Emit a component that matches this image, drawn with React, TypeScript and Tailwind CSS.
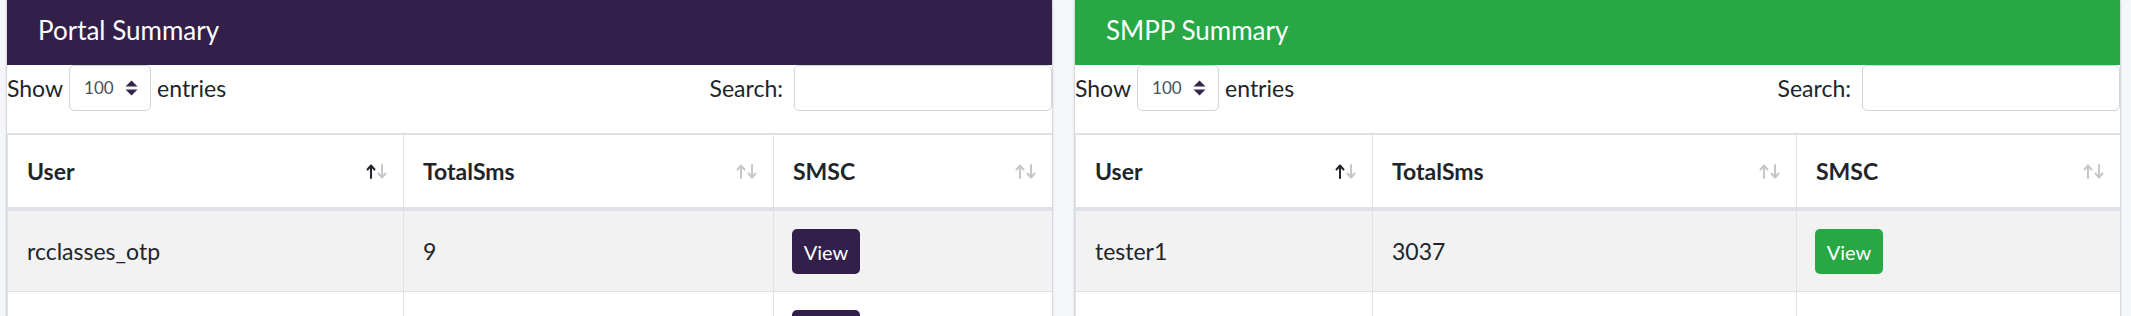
import React from "react";

const SortIcon = ({ active }: { active: boolean }) => (
  <svg width="22" height="15" viewBox="0 0 22 15" className="shrink-0">
    <g stroke={active ? "#212529" : "#c6c7c8"} strokeWidth="2" fill="none" strokeLinecap="round" strokeLinejoin="round">
      <path d="M5 14 V2 M1.5 5.5 L5 1.5 L8.5 5.5" />
    </g>
    <g stroke="#c6c7c8" strokeWidth="2" fill="none" strokeLinecap="round" strokeLinejoin="round">
      <path d="M16 1 V13 M12.5 9.5 L16 13.5 L19.5 9.5" />
    </g>
  </svg>
);

const SelectArrows = () => (
  <svg width="13" height="16" viewBox="0 0 13 16">
    <path d="M0.5 6.5 L6.5 0.5 L12.5 6.5 Z" fill="#33264a" />
    <path d="M0.5 9.5 L12.5 9.5 L6.5 15.5 Z" fill="#33264a" />
  </svg>
);

type Row = { user: string; total: string; button: boolean };

function Panel({
  title,
  color,
  cols,
  rows,
}: {
  title: string;
  color: "purple" | "green";
  cols: string;
  rows: Row[];
}) {
  const headerBg = color === "purple" ? "bg-[#33204a]" : "bg-[#28a745]";
  const btnBg = color === "purple" ? "bg-[#33204a]" : "bg-[#28a745]";
  return (
    <div className="flex-1 bg-white shadow-[0_0_1px_rgba(0,0,0,0.25),0_1px_3px_rgba(0,0,0,0.2)] flex flex-col">
      <div className={`${headerBg} shrink-0 h-[65px] px-[31px] flex items-center text-white text-[26px] pb-[5px]`}>
        {title}
      </div>
      <div className="shrink-0 flex items-center justify-between h-[46px] mb-[22px] text-[23px] text-[#212529]">
        <div className="flex items-center gap-[6px]">
          <span>Show</span>
          <div className="w-[82px] h-[46px] border border-[#ced4da] rounded-[5px] flex items-center pl-[14px] pr-[12px] justify-between">
            <span className="text-[17px] text-[#495057]">100</span>
            <SelectArrows />
          </div>
          <span>entries</span>
        </div>
        <div className="flex items-center gap-[11px]">
          <span>Search:</span>
          <div className="w-[258px] h-[46px] border border-[#ced4da] rounded-[5px] bg-white" />
        </div>
      </div>
      <div className="shrink-0 border-t-2 border-l border-[#dee2e6]">
        <div className={`grid ${cols} h-[76px] border-b-[4px] border-[#dee2e6] text-[23px] font-bold text-[#212529]`}>
          {["User", "TotalSms", "SMSC"].map((h, i) => (
            <div
              key={h}
              className={`flex items-center justify-between pl-[19px] pr-[15px] ${i < 2 ? "border-r border-[#dee2e6]" : ""}`}
            >
              <span>{h}</span>
              <SortIcon active={i === 0} />
            </div>
          ))}
        </div>
        {rows.map((r, idx) => (
          <div
            key={idx}
            className={`grid ${cols} h-[81px] border-b border-[#dee2e6] text-[23px] text-[#212529] ${idx % 2 === 0 ? "bg-[#f2f2f2]" : "bg-white"}`}
          >
            <div className="flex items-center pl-[19px] border-r border-[#dee2e6]">{r.user}</div>
            <div className="flex items-center pl-[19px] border-r border-[#dee2e6]">{r.total}</div>
            <div className="flex items-start pt-[18px] pl-[18px]">
              {r.button && (
                <div className={`${btnBg} text-white text-[20px] w-[68px] h-[45px] rounded-[5px] flex items-center justify-center`}>
                  View
                </div>
              )}
            </div>
          </div>
        ))}
      </div>
    </div>
  );
}

export default function App() {
  return (
    <div
      className="h-[316px] overflow-hidden bg-[#f4f6f9] flex items-start gap-[23px] pl-[7px] pr-[11px]"
      style={{ fontFamily: "Lato, 'Noto Sans', sans-serif" }}
    >
      <Panel
        title="Portal Summary"
        color="purple"
        cols="grid-cols-[396px_370px_1fr]"
        rows={[
          { user: "rcclasses_otp", total: "9", button: true },
          { user: "", total: "", button: true },
        ]}
      />
      <Panel
        title="SMPP Summary"
        color="green"
        cols="grid-cols-[297px_424px_1fr]"
        rows={[
          { user: "tester1", total: "3037", button: true },
          { user: "", total: "", button: false },
        ]}
      />
    </div>
  );
}
